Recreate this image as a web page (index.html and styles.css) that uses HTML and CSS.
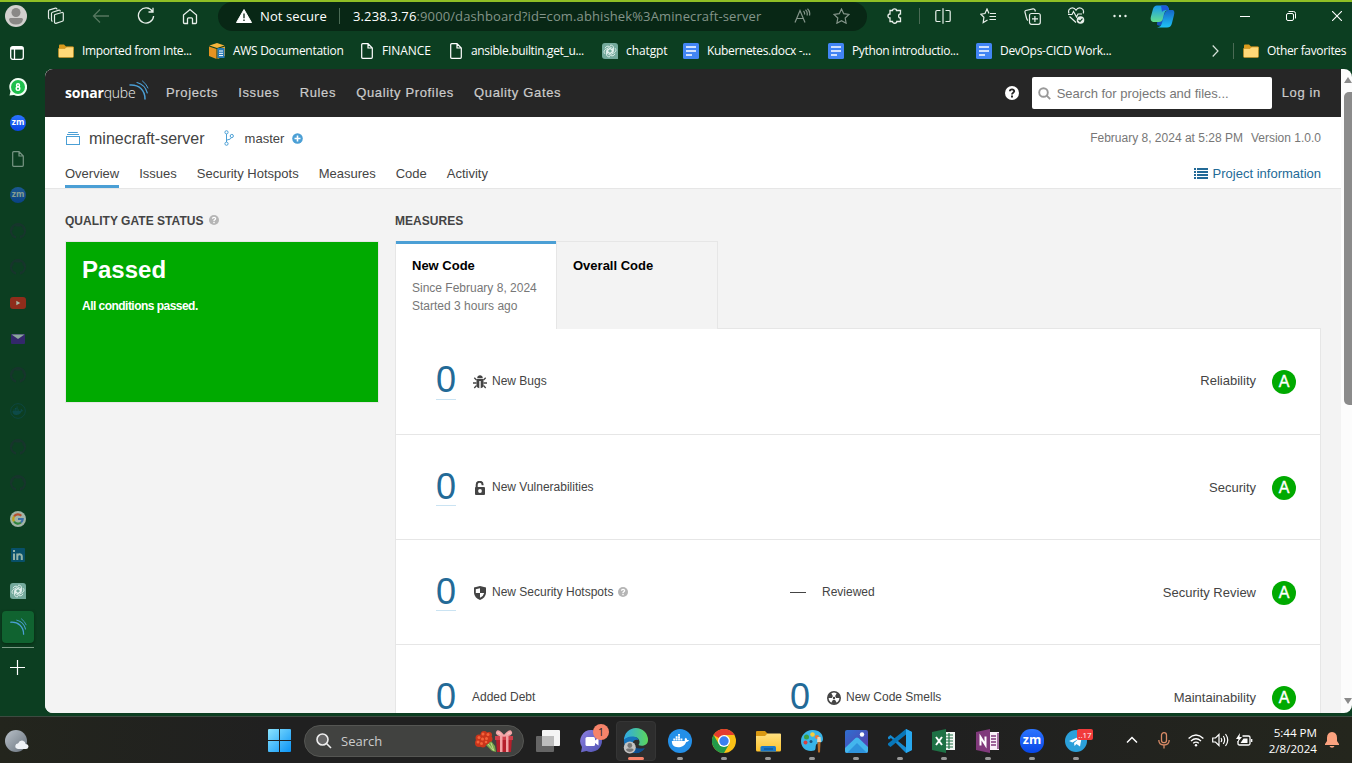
FILE: index.html
```html
<!DOCTYPE html>
<html lang="en">
<head>
<meta charset="utf-8">
<title>minecraft-server</title>
<link rel="stylesheet" href="styles.css">
</head>
<body>
<svg class="defs" width="0" height="0">
  <defs>
    <linearGradient id="gWin" x1="0" y1="0" x2="1" y2="1"><stop offset="0" stop-color="#8be4ff"/><stop offset="1" stop-color="#0a93f5"/></linearGradient>
    <linearGradient id="gFold" x1="0" y1="0" x2="0" y2="1"><stop offset="0" stop-color="#ffe081"/><stop offset="1" stop-color="#fdc22c"/></linearGradient>
    <linearGradient id="gCopA" x1="0" y1="0" x2="0" y2="1"><stop offset="0" stop-color="#1597f0"/><stop offset="1" stop-color="#63e08d"/></linearGradient>
    <linearGradient id="gCopB" x1="0" y1="0" x2="0" y2="1"><stop offset="0" stop-color="#1566c8"/><stop offset="1" stop-color="#1fc3f5"/></linearGradient>
    <linearGradient id="gEdge" x1="0" y1="0" x2="1" y2="0"><stop offset="0" stop-color="#2fa9e8"/><stop offset="1" stop-color="#5bd65a"/></linearGradient>
    <linearGradient id="gPhoto" x1="0" y1="0" x2="1" y2="1"><stop offset="0" stop-color="#2f6fd0"/><stop offset="1" stop-color="#5a3aa8"/></linearGradient>
    <linearGradient id="gChat" x1="0" y1="0" x2="1" y2="1"><stop offset="0" stop-color="#8b7fe0"/><stop offset="1" stop-color="#4f52b2"/></linearGradient>
    <linearGradient id="gMoon" x1="0" y1="0" x2="1" y2="1"><stop offset="0" stop-color="#b9c1c9"/><stop offset="1" stop-color="#68727d"/></linearGradient>
  </defs>
  <symbol id="folder" viewBox="0 0 16 16"><path d="M1 2.500Q1 1.500 2 1.500H6L8 3.500H14.500Q15.500 3.500 15.500 4.500V7H1Z" fill="#d99a1c"/><path d="M0.500 5.500H7L8.500 4H15.500V13.500Q15.500 14.500 14.500 14.500H1.500Q.5 14.500 .5 13.500Z" fill="#ffd978" stroke="#c98f1b" stroke-width=".6"/></symbol>
  <symbol id="page" viewBox="0 0 12 16"><path d="M1.700 .7H7L11.300 5V14.300Q11.300 15.300 10.300 15.300H1.700Q.7 15.300 .7 14.300V1.700Q.7 .7 1.700 .7ZM7 .7V5H11.300" fill="none" stroke="currentColor" stroke-width="1.200"/></symbol>
  <symbol id="doc" viewBox="0 0 16 16"><rect width="16" height="16" rx="1.500" fill="#4285f4"/><path d="M3 4H13M3 8H13M3 12H9" stroke="#fff" stroke-width="1.700"/></symbol>
  <symbol id="gpt" viewBox="0 0 16 16"><path d="M3 0H13Q16 0 16 3V16H3Q0 16 0 13V3Q0 0 3 0Z" fill="#74aa9c"/><g fill="none" stroke="#e5f3ef" stroke-width=".9"><path d="M8 2.300C10 1.700 11.600 3 11.500 5V8.500L8 10.300L5 8.600"/><path d="M13.100 5.200C14.500 6.700 14 8.700 12.300 9.600L9.200 11.300L6 9.300V5.800"/><path d="M12.900 10.700C12.300 12.700 10.300 13.400 8.600 12.400L5.500 10.600V7L8.600 5.200"/><path d="M8 13.700C6 14.300 4.400 13 4.500 11V7.500L8 5.700L11 7.400"/><path d="M2.900 10.800C1.500 9.300 2 7.300 3.700 6.400L6.800 4.700L10 6.700V10.200"/><path d="M3.100 5.300C3.700 3.300 5.700 2.600 7.400 3.600L10.500 5.400V9L7.400 10.800"/></g></symbol>
  <symbol id="gh" viewBox="0 0 16 16"><path d="M6 14.700A7 7 0 1 1 10 14.700" fill="none" stroke="#17352c" stroke-width="2"/><path d="M3.500 6V2.500L6 3.500H10L12.500 2.500V6L13.500 8L14 4L8 1L2 4L2.500 8ZM2.500 11.500L5 13H6V15H4.500ZM10 12.500H12L13.500 11L11 15H10Z" fill="#17352c"/></symbol>
  <symbol id="wave" viewBox="0 0 20 20"><g fill="none" stroke="#4b9fd5" stroke-linecap="round"><path d="M1 5C10 4.500 16 10 16 19" stroke-width="1.500"/><path d="M8 2.500C13.500 4 17 8 18.300 13" stroke-width="1.200"/><path d="M13.500 1Q17.500 4 19 8" stroke-width="1"/></g></symbol>
  <symbol id="help" viewBox="0 0 14 14"><circle cx="7" cy="7" r="7" fill="currentColor"/><path d="M4.900 5.300C5 2.700 9.300 2.900 9.200 5.300C9.100 6.700 7 6.700 7 8.400" fill="none" stroke="var(--mark,#fff)" stroke-width="1.900"/><rect x="6" y="9.500" width="2" height="2" fill="var(--mark,#fff)"/></symbol>
  <symbol id="whale" viewBox="0 0 24 24"><path d="M4 12H17.500Q17 9.500 18.500 8.500Q20 9.500 20 11Q21.500 10.700 22 11.300Q21 13 19 13C17.500 17 14.500 18.500 10.500 18.500C6 18.500 4 16 4 12Z"/><path d="M5.500 9.500H7.500V11.500H5.500ZM8 9.500H10V11.500H8ZM10.500 9.500H12.500V11.500H10.500ZM13 9.500H15V11.500H13ZM8 7H10V9H8ZM10.500 7H12.500V9H10.500ZM10.500 4.700H12.500V6.500H10.500Z"/></symbol>
</svg>

<div class="screen">
  <div class="toolbar">
    <div class="cell c32"><svg width="22" height="22" viewBox="0 0 22 22"><circle cx="11" cy="11" r="11" fill="#d2d0ce"/><circle cx="11" cy="7.500" r="4.500" fill="#8a8886"/><path d="M4 14.500Q4 13 5.500 13H16.500Q18 13 18 14.500Q17 19.500 11 19.500Q5 19.500 4 14.500Z" fill="#8a8886"/></svg></div>
    <div class="cell c48"><svg width="18" height="18" viewBox="0 0 18 18" fill="none" stroke="#e4ece6" stroke-width="1.200"><path d="M8 7.500L15 5.500Q16.300 5.300 16.300 6.500V13Q16.300 14 15.300 14.300L9 16.300Q7.500 16.500 7.500 15V8.500Q7.500 7.700 8 7.500Z"/><path d="M5.500 14.500Q4.500 14 4.500 13V6.500Q4.500 5.500 5.500 5.200L12 3.200Q13.300 3 13.300 4.500"/><path d="M2.500 12Q1.500 11.500 1.500 10.500V4Q1.500 3.200 2.500 2.800L8.500 1.200Q10 1 10 2.500"/></svg></div>
    <div class="cell c42"><svg width="18" height="18" viewBox="0 0 18 18" fill="none" stroke="#55775f" stroke-width="1.300"><path d="M17 9H1.500M8 2.500L1.500 9L8 15.500"/></svg></div>
    <div class="cell c48"><svg width="18" height="18" viewBox="0 0 18 18" fill="none" stroke="#e8efea" stroke-width="1.300"><path d="M15.500 4.500A7.600 7.600 0 1 0 16.600 9M16 .8V5H11.500"/></svg></div>
    <div class="cell c40"><svg width="16" height="17" viewBox="0 0 16 17" fill="none" stroke="#e8efea" stroke-width="1.300"><path d="M1.500 7L8 1.500L14.500 7V14.500Q14.500 15.500 13.500 15.500H10.500V11Q10.500 9.800 9.500 9.800H6.500Q5.500 9.800 5.500 11V15.500H2.500Q1.500 15.500 1.500 14.500Z"/></svg></div>
    <div class="address">
      <svg width="16" height="14" viewBox="0 0 16 14"><path d="M8 .5L15.500 13.500H.5Z" fill="#fff" stroke="#fff" stroke-linejoin="round"/><path d="M8 4.500V9.300M8 10.500V12" stroke="#0a2414" stroke-width="1.300"/></svg>
      <span class="insecure">Not secure</span>
      <span class="vline"></span>
      <span class="url"><b>3.238.3.76</b>:9000/dashboard?id=com.abhishek%3Aminecraft-server</span>
      <svg class="read" width="17" height="16" viewBox="0 0 17 16" fill="none" stroke="#84958a" stroke-width="1.200"><path d="M1 14.500L6 2.500L11 14.500M2.700 10.500H9.300M9.500 3Q11 4.500 10.500 6.500M11.500 1.800Q14 4 13 7.500M13.500 .7Q16.500 3.500 15.500 7.500"/></svg>
      <svg class="star" width="17" height="16" viewBox="0 0 17 16" fill="none" stroke="#84958a" stroke-width="1.200"><path d="M8.500 1L10.700 5.700L16 6.400L12.200 10L13.100 15.200L8.500 12.700L3.900 15.200L4.800 10L1 6.400L6.300 5.700Z"/></svg>
    </div>
    <div class="cell c44 puzzle"><svg width="16" height="16" viewBox="0 0 16 16" fill="none" stroke="#e8efea" stroke-width="1.300"><path d="M3 2.500H5.500C5.500 .2 9.500 .2 9.500 2.500H13.500V6C11 5.500 11 10.500 13.500 10V13.500H9.800C9.800 15.800 5.500 15.800 5.500 13.500H3V10C.3 10 .3 6 3 6Z"/></svg></div>
    <div class="cell c4"><span class="vline"></span></div>
    <div class="cell c44"><svg width="16" height="16" viewBox="0 0 16 16" fill="none" stroke="#e8efea" stroke-width="1.200"><path d="M5.500 2.500H2Q.8 2.500 .8 3.800V12.200Q.8 13.500 2 13.500H5.500M10.500 2.500H14Q15.200 2.500 15.200 3.800V12.200Q15.200 13.500 14 13.500H10.500M8 .3V15.700"/></svg></div>
    <div class="cell c46"><svg width="17" height="16" viewBox="0 0 17 16" fill="none" stroke="#e8efea" stroke-width="1.200"><path d="M9 5.500L7 1L5 5.500L.8 6.200L3.900 9.300L3.200 14.500L7.500 12M10 5.500H16M9.500 8.500H16M9.500 11.500H16"/></svg></div>
    <div class="cell c42"><svg width="17" height="17" viewBox="0 0 17 17" fill="none" stroke="#e8efea" stroke-width="1.200"><rect x="5.500" y="5.500" width="10.800" height="10.800" rx="2"/><path d="M10.900 8V14M8 10.900H14M4 12.500Q3 12 2.500 10L.9 4Q.8 3 1.800 2.500L9 .8Q10.500 .6 11 2L11.400 3.500"/></svg></div>
    <div class="cell c46"><svg width="18" height="18" viewBox="0 0 18 18" fill="none" stroke="#e8efea" stroke-width="1.200"><path d="M9 15.500L2.500 9.500M2 6.500C0 1 6.500-1 9 3.200C11.500-1 18 1 16.200 6.500M1 7.500H5L6.500 4.500L9.500 10L11 7H15"/><circle cx="13.500" cy="13" r="3.800" fill="#e8efea" stroke="none"/><path d="M11.500 13L13 14.500L15.500 11.700" stroke="#0c3e21"/></svg></div>
    <div class="cell c42"><svg width="14" height="4" viewBox="0 0 14 4" fill="#e8efea"><circle cx="1.500" cy="2" r="1.200"/><circle cx="7" cy="2" r="1.200"/><circle cx="12.500" cy="2" r="1.200"/></svg></div>
    <div class="cell c42"><svg width="25" height="23" viewBox="0 0 25 23"><path d="M8 6H15L13 18Q12 22 7 20Z" fill="#1755c0"/><path d="M18 5H23Q25 6 24 10L22 18Q21 22.500 17 22.500H7Q11 22 12 18L14 10Q15 6 18 5Z" fill="url(#gCopB)"/><path d="M7 .5H16Q18.500 1 19 5Q15 5 14 9L12.500 15Q11.500 17 9 17H3Q0 16 .8 12L3 4Q4 .5 7 .5Z" fill="url(#gCopA)"/><path d="M11 .5H16Q18.500 1 19 5H17Q13 5 12 7Z" fill="#1c58d8"/></svg></div>
    <div class="cell c46 window-ctl"><svg width="10" height="10"><path d="M0 5.500H10" stroke="#fff"/></svg></div>
    <div class="cell c46"><svg width="10" height="10" viewBox="0 0 10 10" fill="none" stroke="#fff"><rect x=".5" y="2.500" width="7" height="7" rx="1.500"/><path d="M2.500 .5H7.500Q9.500 .5 9.500 2.500V7.500"/></svg></div>
    <div class="cell c46"><svg width="10" height="10" viewBox="0 0 10 10" stroke="#fff" stroke-width="1.100"><path d="M0 0L10 10M10 0L0 10"/></svg></div>
  </div>

  <div class="bookmarks">
    <div class="panes"><svg width="14" height="14" viewBox="0 0 14 14" fill="none" stroke="#fff" stroke-width="1.300"><rect x=".7" y=".7" width="12.600" height="12.600" rx="2"/><path d="M1 2.300H13" stroke-width="2.600"/><path d="M4.500 3V13"/></svg></div>
    <div class="bm w151"><svg width="16" height="16"><use href="#folder"/></svg><span class="tight">Imported from Inte...</span></div>
    <div class="bm w151"><svg width="16" height="16" viewBox="0 0 16 16"><path d="M8 0L15.500 2.500L8 5L.5 2.500Z" fill="#f7b53c"/><path d="M0 3.500L7.500 6V16L0 13Z" fill="#e69320"/><path d="M8.500 6L16 3.500V13L8.500 16Z" fill="#f0a830"/><rect x="8.500" y="5" width="7" height="10" fill="#2479b5"/><path d="M10 8H14M10 10.300H14M10 12.600H14" stroke="#fff"/></svg><span>AWS Documentation</span></div>
    <div class="bm w89"><svg class="pg" width="12" height="16"><use href="#page"/></svg><span class="finance">FINANCE</span></div>
    <div class="bm w153"><svg class="pg" width="12" height="16"><use href="#page"/></svg><span class="tight ansible">ansible.builtin.get_u...</span></div>
    <div class="bm w81"><svg width="16" height="16"><use href="#gpt"/></svg><span class="loose">chatgpt</span></div>
    <div class="bm w145"><svg width="16" height="16"><use href="#doc"/></svg><span class="tight">Kubernetes.docx -...</span></div>
    <div class="bm w148"><svg width="16" height="16"><use href="#doc"/></svg><span class="tight">Python introductio...</span></div>
    <div class="bm w148"><svg width="16" height="16"><use href="#doc"/></svg><span>DevOps-CICD Work...</span></div>
    <div class="more"><svg width="7" height="12" viewBox="0 0 7 12" fill="none" stroke="#d7e2da" stroke-width="1.200"><path d="M.7 .5L6 6L.7 11.500"/></svg><span class="vline"></span></div>
    <div class="bm"><svg width="16" height="16"><use href="#folder"/></svg><span class="tight">Other favorites</span></div>
  </div>

  <div class="middle">
    <div class="tabs">
      <div class="tab"><svg width="18" height="18" viewBox="0 0 18 18"><path d="M9 0A9 9 0 1 1 5 17L.5 17.500L1.500 13.500A9 9 0 0 1 9 0Z" fill="#f3fff5"/><circle cx="9" cy="9" r="7" fill="#1fc04d"/><circle cx="9" cy="7.200" r="1.500" fill="none" stroke="#fff" stroke-width="1.400"/><circle cx="9" cy="10.600" r="1.800" fill="none" stroke="#fff" stroke-width="1.400"/></svg></div>
      <div class="tab"><span class="zm">zm</span></div>
      <div class="tab dim"><svg width="12" height="16" color="#e0eae3"><use href="#page"/></svg></div>
      <div class="tab dim"><span class="zm">zm</span></div>
      <div class="tab"><svg width="16" height="16"><use href="#gh"/></svg></div>
      <div class="tab"><svg width="16" height="16"><use href="#gh"/></svg></div>
      <div class="tab"><svg width="16" height="12" viewBox="0 0 16 12"><rect width="16" height="12" rx="3" fill="#8f2d1b"/><path d="M6.300 3.700L10.300 6L6.300 8.300Z" fill="#a9b9a5"/></svg></div>
      <div class="tab"><svg width="14" height="10" viewBox="0 0 14 10"><rect width="14" height="10" rx="1" fill="#33286b"/><path d="M.5 .5H13.500L7 5Z" fill="#8ba79a"/></svg></div>
      <div class="tab"><svg width="16" height="16"><use href="#gh"/></svg></div>
      <div class="tab"><svg width="16" height="16" viewBox="0 0 24 24"><circle cx="12" cy="12" r="11" fill="none" stroke="#0d4640" stroke-width="1.500"/><use href="#whale" fill="#0d4a48" width="22" height="24"/></svg></div>
      <div class="tab"><svg width="16" height="16"><use href="#gh"/></svg></div>
      <div class="tab"><svg width="16" height="16"><use href="#gh"/></svg></div>
      <div class="tab"><svg width="16" height="16" viewBox="0 0 16 16" fill="none" stroke-width="2.200"><circle cx="8" cy="8" r="8" fill="#a2b5a7"/><path d="M11.300 4.700A4.700 4.700 0 0 0 4 5.500" stroke="#b5502f"/><path d="M4 5.500A4.700 4.700 0 0 0 4 10.500" stroke="#c1a21b"/><path d="M4 10.500A4.700 4.700 0 0 0 11 11.500" stroke="#33843e"/><path d="M11 11.500Q12.700 10 12.700 8H8" stroke="#3c70a8"/></svg></div>
      <div class="tab"><svg width="14" height="14" viewBox="0 0 14 14"><rect width="14" height="14" rx="1" fill="#085069"/><path d="M3 5.500V12M3 2V4M6.300 12V5.500M6.300 8.500C6.300 5.500 10.800 5.300 10.800 8.500V12" stroke="#94b3a7" stroke-width="2" fill="none"/></svg></div>
      <div class="tab"><svg width="16" height="16"><use href="#gpt"/></svg></div>
      <div class="tab active"><svg width="17" height="17"><use href="#wave"/></svg></div>
      <div class="tab-sep"></div>
      <svg class="plus" width="15" height="15"><path d="M0 7.500H15M7.500 0V15" stroke="#fff" stroke-width="1.200"/></svg>
    </div>

    <div class="viewport">
      <div class="app">
        <nav class="navbar">
          <div class="logo"><b>sonar</b><span>qube</span><svg width="20" height="20"><use href="#wave"/></svg></div>
          <a>Projects</a><a>Issues</a><a>Rules</a><a>Quality Profiles</a><a>Quality Gates</a>
          <svg class="nav-help" width="14" height="14"><use href="#help"/></svg>
          <div class="search"><svg width="13" height="13" viewBox="0 0 13 13" fill="none" stroke="#999" stroke-width="1.900"><circle cx="5.500" cy="5.500" r="4.300"/><path d="M8.700 8.700L12.200 12.200"/></svg><span>Search for projects and files...</span></div>
          <a class="login">Log in</a>
        </nav>

        <header class="project">
          <div class="crumb">
            <svg width="14" height="14" viewBox="0 0 14 14" fill="none" stroke="#4b9fd5"><rect x=".5" y="5.500" width="13" height="8"/><path d="M1 3.500H13M2.200 1.500H11.800"/></svg>
            <span class="name">minecraft-server</span>
            <svg class="branch" width="10" height="16" viewBox="0 0 10 16" fill="none" stroke="#4b9fd5"><circle cx="2.500" cy="2.300" r="1.600"/><circle cx="2.500" cy="13.700" r="1.600"/><circle cx="7.800" cy="6" r="1.600"/><path d="M2.500 4V12M7.500 7.500Q7 9.500 3 10"/></svg>
            <span class="branch-name">master</span>
            <svg width="11" height="11" viewBox="0 0 11 11"><circle cx="5.500" cy="5.500" r="5.300" fill="#4b9fd5"/><path d="M5.500 2.500V8.500M2.500 5.500H8.500" stroke="#fff" stroke-width="1.600"/></svg>
            <span class="meta">February 8, 2024 at 5:28 PM</span><span class="version">Version 1.0.0</span>
          </div>
          <div class="menu">
            <a class="current">Overview</a><a>Issues</a><a>Security Hotspots</a><a>Measures</a><a>Code</a><a>Activity</a>
            <a class="info"><svg width="14" height="12" viewBox="0 0 14 12" stroke="#236a97" stroke-width="2"><path d="M0 1H2M3 1H14M0 4H2M3 4H14M0 7H2M3 7H14M0 10H2M3 10H14"/></svg>Project information</a>
          </div>
        </header>

        <main class="overview">
          <section class="gate">
            <h2>QUALITY GATE STATUS <svg width="10" height="10"><use href="#help"/></svg></h2>
            <div class="passed"><h3>Passed</h3><p>All conditions passed.</p></div>
          </section>
          <section class="measures">
            <h2>MEASURES</h2>
            <div class="code-tabs">
              <div class="code-tab on"><b>New Code</b><span>Since February 8, 2024</span><span>Started 3 hours ago</span></div>
              <div class="code-tab"><b>Overall Code</b></div>
              <div class="rest"></div>
            </div>
            <div class="panel">
              <div class="row first"><a class="num">0</a>
                <svg class="ric" width="14" height="14" viewBox="0 0 14 14"><path d="M4.200 3.200C4.200-.6 9.800-.6 9.800 3.200ZM3.500 4H10.500V11Q10 13 7.700 13.300V6H6.300V13.300Q4 13 3.500 11Z" fill="#444"/><path d="M3.500 5L1.300 2.800M10.500 5L12.700 2.800M3.500 8H0M10.500 8H14M3.500 10.500L1.300 13M10.500 10.500L12.700 13" stroke="#444" stroke-width="1.300"/></svg>
                <span class="lab">New Bugs</span><span class="cat">Reliability</span><span class="rating">A</span></div>
              <div class="row"><a class="num">0</a>
                <svg class="ric" width="14" height="14" viewBox="0 0 14 14"><path d="M3.700 7V3.700C3.700-.2 9.600-.2 9.600 3.700V4.300" fill="none" stroke="#444" stroke-width="2"/><path d="M3 6H11Q12 6 12 7V13Q12 14 11 14H3Q2 14 2 13V7Q2 6 3 6Z" fill="#444"/><circle cx="7" cy="10" r="1.900" fill="#fff"/></svg>
                <span class="lab">New Vulnerabilities</span><span class="cat">Security</span><span class="rating">A</span></div>
              <div class="row"><a class="num">0</a>
                <svg class="ric" width="14" height="14" viewBox="0 0 14 14"><path d="M7 0L13 1.500V7Q12.500 12 7 14Q1.500 12 1 7V1.500Z" fill="#444"/><path d="M7 2.300V7H2.800V3.200ZM7 7H11.200Q10.500 10.300 7 11.800Z" fill="#fff"/></svg>
                <span class="lab">New Security Hotspots <svg width="10" height="10"><use href="#help"/></svg></span>
                <div class="second"><i class="dash"></i><span class="lab">Reviewed</span></div>
                <span class="cat">Security Review</span><span class="rating">A</span></div>
              <div class="row"><a class="num">0</a><span class="lab">Added Debt</span>
                <div class="second"><a class="num">0</a>
                <svg class="ric" width="14" height="14" viewBox="0 0 14 14"><circle cx="7" cy="7" r="6.200" fill="none" stroke="#444" stroke-width="1.600"/><path d="M7 7L4 1.800Q7 .2 10 1.800ZM7 7H13Q13 10.500 10 12.200ZM7 7H1Q1 10.500 4 12.200Z" fill="#444" transform="rotate(180 7 7)"/><circle cx="7" cy="7" r="2" fill="#fff"/><circle cx="7" cy="7" r="1.200" fill="#444"/></svg>
                <span class="lab">New Code Smells</span></div>
                <span class="cat">Maintainability</span><span class="rating">A</span></div>
            </div>
          </section>
        </main>
      </div>
      <div class="scroll"><i class="up"></i><i class="thumb"></i><i class="down"></i></div>
    </div>
  </div>

  <div class="taskbar">
    <div class="tk weather"><svg width="24" height="22" viewBox="0 0 24 22"><circle cx="11" cy="11" r="11" fill="url(#gMoon)"/><path d="M13 19Q10 18.500 10.300 15.800Q10.800 13.500 13 13.600Q14.500 10 18 10.700Q20.500 11.500 20.600 14Q23.500 14.300 23.500 16.800Q23 19 21 19Z" fill="#eef1f5"/></svg></div>
    <div class="tk start"><svg width="24" height="24" viewBox="0 0 24 24" fill="url(#gWin)"><path d="M1 0H11V11H0V1Q0 0 1 0ZM12 0H22Q23 0 23 1V11H12ZM0 12H11V23H1Q0 23 0 22ZM12 12H23V22Q23 23 22 23H12Z"/></svg></div>
    <div class="tsearch">
      <svg width="16" height="16" viewBox="0 0 16 16" fill="#666" stroke="#eee" stroke-width="1.600"><circle cx="6.500" cy="6.500" r="5.500"/><path d="M10.500 10.500L15 15"/></svg><span>Search</span>
      <svg class="gift" width="40" height="24" viewBox="0 0 40 24"><path d="M12 16L17 12L21 17L22 23L18 22Z" fill="#79a94b"/><path d="M14 15L19 21M17 14L20 22" stroke="#c2d88c"/><g fill="#c9351b"><circle cx="5" cy="9" r="3.500"/><circle cx="10" cy="5.500" r="3.500"/><circle cx="15" cy="6" r="3"/><circle cx="5" cy="14" r="4"/><circle cx="11" cy="11" r="5"/><circle cx="15.500" cy="10" r="3"/><circle cx="9" cy="15.500" r="3"/></g><g fill="#f4623a"><circle cx="5" cy="8.500" r="1.500"/><circle cx="9" cy="5" r="1.500"/><circle cx="14" cy="5.500" r="1.500"/><circle cx="4" cy="13" r="1.500"/><circle cx="8.500" cy="10" r="1.500"/><circle cx="12.500" cy="9.500" r="1.500"/><circle cx="12" cy="13" r="1.300"/><circle cx="7.500" cy="14.500" r="1.500"/></g><path d="M22 9H38L37 23H23Z" fill="#b51f2b"/><path d="M21 7H39V11H21Z" fill="#cf3f4a"/><path d="M26 7H28.500V23H26ZM32 7H34.500V23H32Z" fill="#f2a2a4"/><path d="M30 7Q24 0 23 3Q21 6 30 7Q39 6 37 3Q36 0 30 7" fill="#f7c1bf" stroke="#f2a2a4" stroke-width="1.600"/></svg>
    </div>
    <div class="tk first-app"><svg width="24" height="22" viewBox="0 0 24 22"><rect x="6" width="18" height="16" rx="1" fill="#f5f5f5"/><rect y="6" width="18" height="16" rx="1" fill="#777" opacity=".8"/><rect x="6" y="6" width="12" height="10" fill="#bdbdbd"/></svg></div>
    <div class="tk"><svg width="24" height="24" viewBox="0 0 24 24"><path d="M12 1A11 11 0 1 1 6.500 22L1 23.300L2 18A11 11 0 0 1 12 1Z" fill="url(#gChat)"/><rect x="5.500" y="8" width="9.500" height="9" rx="1.500" fill="#fff"/><path d="M15 11.500L18.500 9V16.500L15 14Z" fill="#fff"/></svg><em class="badge">1</em></div>
    <div class="tk edge"><svg width="26" height="26" viewBox="0 0 26 26"><path d="M1 12A12 12 0 0 1 25 12C25 18 18 18.500 15.500 17C18 14 16 9 11 9Q4 9 1 12Z" fill="url(#gEdge)"/><path d="M1 12Q4 8 10.500 8.500Q15 9 15.500 12Q9 11 10 17Q12 23 21 21Q17 25.500 12 25A12 12 0 0 1 1 12Z" fill="#1574bd"/><path d="M10 16Q11 22 22 20Q17 26 12 25Q7 22 10 16Z" fill="#0d4f91"/><circle cx="6.800" cy="19.500" r="6" fill="#c3c3c3"/><circle cx="6.800" cy="17.500" r="2.400" fill="#767676"/><path d="M3 22Q3 20.500 4.500 20.500H9Q10.600 20.500 10.600 22Q9 24 6.800 24Q4.500 24 3 22Z" fill="#767676"/></svg><i class="dot wide"></i></div>
    <div class="tk"><svg width="24" height="24" viewBox="0 0 24 24"><circle cx="12" cy="12" r="12" fill="#238fe8"/><use href="#whale" fill="#fff" width="23" height="24"/></svg><i class="dot"></i></div>
    <div class="tk"><svg width="24" height="24" viewBox="0 0 24 24"><circle cx="12" cy="12" r="12" fill="#fbc116"/><path d="M12 12L1.600 6A12 12 0 0 1 22.400 6H12Z" fill="#e33b2e"/><path d="M1.600 6A12 12 0 0 0 12 24L17.200 15L12 17L6.800 15Z" fill="#229a49"/><circle cx="12" cy="12" r="6" fill="#fff"/><circle cx="12" cy="12" r="4.700" fill="#3a7ff0"/></svg><i class="dot"></i></div>
    <div class="tk"><svg width="25" height="22" viewBox="0 0 25 22"><path d="M0 2Q0 1 1 1H9L12 4H24V8H0Z" fill="#d99812"/><path d="M0 6H9L11.500 3.500H24Q25 3.500 25 4.500V20Q25 21.500 23.500 21.500H1.500Q0 21.500 0 20Z" fill="url(#gFold)"/><path d="M4.500 21.500V17.500Q4.500 16 6 16H18.500Q20 16 20 17.500V21.500Z" fill="#1c78c8"/><path d="M8 19H17" stroke="#0e5a9d" stroke-width="1.500"/></svg><i class="dot"></i></div>
    <div class="tk"><svg width="24" height="24" viewBox="0 0 24 24"><path d="M12 1C19 .5 23 5 23 10C23 15 17 13 16 16C15 19 17 22 11 22C5 22 1 18 1 12C1 6 6 1.500 12 1Z" fill="#39b5e8"/><circle cx="6.500" cy="8" r="2.500" fill="#3d9e42"/><circle cx="12.500" cy="5.500" r="2.300" fill="#f5ce3b"/><circle cx="17" cy="8" r="2" fill="#ef7833"/><circle cx="5.500" cy="13.500" r="2" fill="#d64040"/><circle cx="11" cy="12.500" r="1.500" fill="#1d567c"/><path d="M17.500 8H20.500L21 13H17Z" fill="#e7d5bb"/><path d="M17.500 13H20.500L20 23Q19 24.500 18 23Z" fill="#b86e2b"/></svg><i class="dot"></i></div>
    <div class="tk"><svg width="23" height="23" viewBox="0 0 23 23"><rect width="23" height="23" rx="2" fill="url(#gPhoto)"/><path d="M0 18L10.500 8Q12 7 13.500 8L23 17V21Q23 23 21 23H2Q0 23 0 21Z" fill="#43b6ed"/><path d="M2 23L12 13L22 23Z" fill="#2e93dc"/><circle cx="17" cy="4.500" r="2.200" fill="#fff"/></svg><i class="dot"></i></div>
    <div class="tk"><svg width="25" height="24" viewBox="0 0 25 24"><path d="M18 0L24 3V21L18 24L3 9L1 10.500L0 9.500V8L2.500 6L18 18.500Z" fill="#168bd2"/><path d="M18 5.500L2.500 18L0 16V14.500L18 0Z" fill="#0877b9"/><path d="M18 0L24 3V21L18 24Z" fill="#28a8ef"/></svg><i class="dot"></i></div>
    <div class="tk"><svg width="24" height="24" viewBox="0 0 24 24"><rect x="11" y="3" width="12" height="18" fill="#f3f7f4"/><path d="M13 6H21M13 9H21M13 12H21M13 15H21M13 18H21M17 4V20" stroke="#217346" stroke-width="1.200"/><path d="M0 3L14 0V24L0 21Z" fill="#1e7145"/><path d="M4 8L10 16M10 8L4 16" stroke="#fff" stroke-width="2"/></svg><i class="dot"></i></div>
    <div class="tk"><svg width="24" height="24" viewBox="0 0 24 24"><rect x="12" y="3" width="11" height="18" fill="#f8f0f8"/><path d="M15 7H20M15 10H20M15 13H20M15 16H20M22 4V20" stroke="#80397b" stroke-width="1.400"/><path d="M0 3L14 0V24L0 21Z" fill="#80397b"/><path d="M4.500 16.500V8L9.500 16V7.500" fill="none" stroke="#fff" stroke-width="2"/></svg><i class="dot"></i></div>
    <div class="tk"><span class="zm big">zm</span><i class="dot"></i></div>
    <div class="tk"><svg width="22" height="22" viewBox="0 0 22 22"><circle cx="11" cy="11" r="11" fill="#2ba0da"/><path d="M4 11L17 5.500L15 16.500L11.500 14L9.500 16L9 13L14 8.500L7.500 12.500Z" fill="#fff"/></svg><em class="count">..17</em><i class="dot"></i></div>
    <div class="tray chev"><svg width="12" height="8" viewBox="0 0 12 8" fill="none" stroke="#fff" stroke-width="1.500"><path d="M1 6.500L6 1.500L11 6.500"/></svg></div>
    <div class="tray t32"><svg width="12" height="17" viewBox="0 0 12 17" fill="none" stroke="#d88a66" stroke-width="1.300"><rect x="3.500" y=".7" width="5" height="10" rx="2.500"/><path d="M.8 8Q.8 13 6 13Q11.200 13 11.200 8M6 13V16.500"/></svg></div>
    <div class="tray wifi"><svg width="16" height="13" viewBox="0 0 16 13" fill="none" stroke="#fff" stroke-width="1.400"><path d="M.6 4.500Q8-2.500 15.400 4.500M3 7Q8 2.500 13 7M5.200 9.300Q8 7 10.800 9.300"/><circle cx="8" cy="11.300" r="1.200" fill="#fff" stroke="none"/></svg></div>
    <div class="tray t24"><svg width="17" height="14" viewBox="0 0 17 14" fill="none" stroke="#fff" stroke-width="1.200"><path d="M.7 5H3.500L7 1.500V12.500L3.500 9H.7ZM9 5Q10.500 7 9 9M11.300 3Q14 7 11.300 11M13.500 1Q18 7 13.500 13"/></svg></div>
    <div class="tray t24"><svg width="17" height="14" viewBox="0 0 17 14" fill="none" stroke="#fff" stroke-width="1.300"><path d="M6.500 3H12.500Q14 3 14 4.500V10.500Q14 12 12.500 12H3.500Q2 12 2 10.500V8M15.700 6V9"/><path d="M7.500 5.500H11.500V10H4.500Z" fill="#fff" stroke="none"/><path d="M4 0L0 6H2.500L1.500 9.500L6 4H3.500Z" fill="#fff" stroke="none"/></svg></div>
    <div class="clock"><span>5:44 PM</span><span>2/8/2024</span></div>
    <div class="tray bell"><svg width="14" height="16" viewBox="0 0 14 16" fill="#fba27f"><path d="M7 0Q12 .5 12 6V9L14 12V13H0V12L2 9V6Q2 .5 7 0ZM4.500 14H9.500Q9 15.800 7 15.800Q5 15.800 4.500 14Z"/></svg></div>
  </div>
</div>
</body>
</html>
```
FILE: styles.css
```css
* { box-sizing: border-box; }
body { margin: 0; overflow: hidden; font-family: "Liberation Sans", Arial, sans-serif; }
.defs { position: absolute; }
svg { display: block; flex: none; }
h2, h3, p { margin: 0; }

.screen {
  width: 1352px; height: 763px; display: flex; flex-direction: column;
  background: #0c3e21; border-top: 2px solid #8fbf25; overflow: hidden;
}

/* Browser toolbar */
.toolbar { height: 30px; flex: none; display: flex; align-items: flex-start; font-family: "Open Sans", sans-serif; }
.cell { display: flex; align-items: center; justify-content: center; flex: none; height: 28px; }
.c4 { width: 4px; } .c32 { width: 32px; } .c40 { width: 40px; } .c42 { width: 42px; }
.c44 { width: 44px; } .c46 { width: 46px; } .c48 { width: 48px; }
.vline { width: 1px; height: 16px; background: #4b6b55; flex: none; }
.address {
  width: 649px; height: 29px; margin: 0 0 0 8px; flex: none; display: flex; align-items: center;
  padding: 0 0 2px 18px; background: #082715; border-radius: 0 0 15px 15px; font-size: 13px; white-space: nowrap;
}
.address { border-radius: 15px; }
.insecure { width: 79px; margin-left: 8px; color: #fff; letter-spacing: .1px; }
.url { width: 442px; margin-left: 13px; color: #84958a; letter-spacing: .12px; }
.url b { font-weight: 400; color: #fff; }
.read { margin-left: -1px; }
.star { margin-left: 22px; }
.puzzle { margin-left: 6px; }
.window-ctl { margin-left: 39px; }

/* Favourites bar */
.bookmarks { height: 37px; flex: none; display: flex; align-items: center; font: 12px "Open Sans", sans-serif; letter-spacing: -.29px; color: #fff; white-space: nowrap; }
.panes { width: 58px; padding: 5px 0 0 10px; }
.bm { display: flex; align-items: center; gap: 8px; flex: none; }
.tight { letter-spacing: -.35px; }
.loose { letter-spacing: -.1px; }
.finance { letter-spacing: -.1px; margin-left: 1px; }
.ansible { margin-left: 1px; }
.pg { margin-left: 1px; }
.w151 { width: 151px; } .w153 { width: 153px; } .w89 { width: 89px; } .w81 { width: 81px; }
.w145 { width: 145px; } .w148 { width: 148px; }
.more { display: flex; align-items: center; gap: 14px; width: 31px; margin-left: 88px; }

/* Vertical tabs */
.middle { height: 644px; flex: none; display: flex; }
.tabs { width: 45px; display: flex; flex-direction: column; }
.tab { width: 36px; height: 36px; flex: none; display: flex; align-items: center; justify-content: center; }
.tab.dim { opacity: .5; }
.tab.active { width: 32px; height: 32px; margin: 2px; background: #106330; border-radius: 4px; box-shadow: 0 1px 3px #06280f; }
.tab.active svg { margin-top: -2px; }
.tab-sep { height: 1px; width: 32px; margin: 2px 2px 12px; background: #7c9c86; }
.plus { margin-left: 10px; }
.zm {
  width: 16px; height: 16px; border-radius: 50%; background: linear-gradient(#2b74ff, #0846e6); color: #fff;
  font: 700 8.5px/14px "Open Sans", sans-serif; text-align: center;
}
.zm.big { width: 24px; height: 24px; border-radius: 11px; font-size: 12.5px; line-height: 21px; }

/* Web page */
.viewport { width: 1307px; height: 644px; display: flex; background: #fcfcfc; border-radius: 8px; overflow: hidden; }
.app { width: 1296px; background: #f3f3f3; }
.scroll { width: 11px; padding-left: 3px; display: flex; flex-direction: column; overflow: hidden; }
.up, .down { width: 8px; border: 4px solid transparent; border-bottom: 6px solid #8b8b8b; border-top: 0; }
.up { margin-top: 8px; }
.thumb { width: 12px; height: 313px; margin-top: 9px; background: #8b8b8b; border-radius: 5px; }
.down { margin-top: 293px; border-top: 6px solid #8b8b8b; border-bottom: 0; }

.navbar { height: 48px; background: #262626; display: flex; align-items: center; padding: 0 20px; font-size: 13px; letter-spacing: .65px; color: #ccc; white-space: nowrap; }
.navbar a { margin-right: 20px; line-height: 48px; height: 48px; -webkit-text-stroke: .2px #ccc; }
.logo { width: 84px; height: 26px; margin-right: 17px; display: flex; align-items: center; color: #fff; font: 14px/26px "Open Sans", sans-serif; letter-spacing: -.2px; }
.logo b { font-weight: 700; }
.logo span { color: #f2f2f2; font-weight: 300; }
.logo svg { margin: -6px 0 0 -6px; }
.nav-help { margin-left: auto; color: #fff; --mark: #262626; }
.search { width: 240px; height: 32px; margin: 0 10px 0 13px; padding-left: 6px; display: flex; align-items: center; gap: 6px; background: #fff; border-radius: 2px; color: #777; font-size: 13px; letter-spacing: 0; }
.navbar .login { margin: 0; }

.project { height: 72px; background: #fff; border-bottom: 1px solid #e6e6e6; padding: 0 20px; color: #444; display: flex; flex-direction: column; white-space: nowrap; }
.crumb { display: flex; align-items: center; height: 43px; font-size: 13px; padding-left: 1px; }
.name { font-size: 16px; margin: 1px 0 0 9px; }
.branch { margin: 0 11px 0 19px; }
.branch-name { margin-right: 8px; }
.meta { margin-left: auto; font-size: 12px; color: #777; }
.version { margin-left: 8px; font-size: 12px; color: #777; }
.menu { display: flex; gap: 20px; font-size: 13px; }
.menu a { height: 29px; line-height: 30px; }
.menu .current { border-bottom: 3px solid #4b9fd5; }
.menu .info { margin-left: auto; display: flex; align-items: center; gap: 5px; color: #236a97; }

.overview { display: flex; padding: 24px 20px 0; gap: 16px; }
.overview h2 { height: 28px; display: flex; align-items: flex-start; gap: 5px; font-size: 12px; line-height: 16px; letter-spacing: .04px; color: #444; }
.overview h2 svg { margin-top: 2px; color: #b5b5b5; }
.gate { width: 314px; flex: none; }
.passed { height: 162px; border: 1px solid #e6e6e6; padding: 13px 16px; color: #fff; background: #0a0; background-clip: padding-box; }
.passed h3 { font-size: 24px; line-height: 30px; }
.passed p { margin-top: 12px; font-size: 12px; font-weight: 700; line-height: 18px; letter-spacing: -.53px; }
.measures { width: 926px; }
.code-tabs { display: flex; height: 88px; }
.code-tab { width: 162px; padding: 15px 15px 0 16px; border: 1px solid #e6e6e6; border-bottom: 0; display: flex; flex-direction: column; color: #000; font-size: 13px; line-height: 18px; white-space: nowrap; }
.code-tab span { color: #777; font-size: 12px; }
.code-tab b { margin-bottom: 4px; }
.code-tab.on { width: 161px; padding-top: 16px; background: #fff; border-right: 0; border-top: 0; box-shadow: inset 0 3px #4b9fd5; }
.rest { flex: 1; border-bottom: 1px solid #e6e6e6; }
.panel { background: #fff; border: solid #e6e6e6; border-width: 0 1px; }
.row { height: 105px; display: flex; align-items: center; border-bottom: 1px solid #e6e6e6; padding: 0 24px 0 40px; font-size: 12px; color: #444; position: relative; }
.row.first { height: 106px; }
.row.first .num { line-height: 36px; margin-top: -1px; }
.row.first .lab, .row.first .cat { margin-top: -2px; }
.row.first .ric { margin-top: 0; }
.num { width: 20px; height: 38px; border-bottom: 1px solid #cae3f2; color: #236a97; font-size: 36px; line-height: 38px; margin-right: 16px; }
.ric { margin: 1px 5px 0 1px; }
.lab { display: flex; align-items: center; gap: 5px; }
.lab svg { color: #b5b5b5; }
.second { position: absolute; left: 394px; top: 0; bottom: 0; display: flex; align-items: center; }
.dash { width: 16px; height: 1px; background: #444; margin-right: 16px; }
.cat { margin-left: auto; font-size: 13px; }
.rating { width: 24px; height: 24px; margin: 1px 0 0 16px; border-radius: 50%; background: #0a0; color: #fff; font-size: 16px; line-height: 24px; text-align: center; -webkit-text-stroke: .4px #fff; }

/* Taskbar */
.taskbar { height: 46px; margin-top: 4px; flex: none; display: flex; align-items: center; background: linear-gradient(90deg, #23251d, #202020 20%, #202020 70%, #24261d); box-shadow: 0 -1px #3d4a40; font-family: "Open Sans", sans-serif; color: #fff; }
.tk { width: 44px; height: 46px; flex: none; display: flex; align-items: center; justify-content: center; position: relative; padding-top: 2px; }
.weather { width: 34px; }
.start { margin-left: 224px; }
.tsearch { width: 220px; height: 32px; margin: 2px 0 0 2px; padding: 0 9px 0 11px; flex: none; display: flex; align-items: center; gap: 9px; background: #414240; border: 1px solid #555653; border-radius: 16px; font-size: 13px; color: #ccc; }
.gift { margin-left: auto; }
.first-app { margin-left: 2px; }
.edge::before { content: ""; position: absolute; inset: 4px 2px 2px; background: #2d2d2d; border: 1px solid #353535; border-radius: 4px; }
.edge svg { position: relative; }
.dot { position: absolute; bottom: 3px; left: 19px; width: 6px; height: 3px; border-radius: 2px; background: #989898; }
.dot.wide { left: 14px; width: 16px; background: #f6836a; }
.badge { position: absolute; left: 23px; top: 7px; width: 16px; height: 16px; border-radius: 50%; background: #f6836a; color: #222; font: 10.5px/16px "Open Sans", sans-serif; text-align: center; }
.count { position: absolute; left: 23px; top: 12px; width: 16px; height: 11px; border-radius: 2px; background: #f13b3b; font: 8px/11px "Open Sans", sans-serif; text-align: center; }
.tray { display: flex; justify-content: center; flex: none; width: 24px; }
.chev { width: 32px; margin-left: 18px; }
.t32 { width: 32px; }
.wifi { margin-left: 4px; }
.clock { width: 61px; flex: none; display: flex; flex-direction: column; align-items: flex-end; font-size: 11.6px; line-height: 16px; padding-top: 1px; }
.bell { margin-left: 3px; }
```
